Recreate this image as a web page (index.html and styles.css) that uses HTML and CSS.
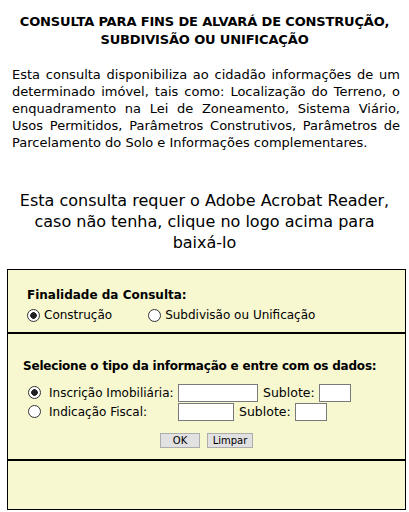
FILE: index.html
```html
<!DOCTYPE html>
<html lang="pt-BR">
<head>
    <meta charset="UTF-8">
    <title>Consulta para fins de Alvará de Construção</title>
    <link rel="stylesheet" href="styles.css">
</head>
<body>
    <h1 class="title">CONSULTA PARA FINS DE ALVARÁ DE CONSTRUÇÃO,<br>SUBDIVISÃO OU UNIFICAÇÃO</h1>

    <p class="intro">
        Esta consulta disponibiliza ao cidadão informações de um determinado imóvel, tais como: Localização do Terreno, o enquadramento na Lei de Zoneamento, Sistema Viário, Usos Permitidos, Parâmetros Construtivos, Parâmetros de Parcelamento do Solo e Informações complementares.
    </p>

    <p class="acrobat">Esta consulta requer o Adobe Acrobat Reader, caso não tenha, clique no logo acima para baixá-lo</p>

    <form class="consulta-box" onsubmit="return false">
        <div class="section section-finalidade">
            <h2>Finalidade da Consulta:</h2>
            <div class="radio-line">
                <label class="opt"><input type="radio" name="finalidade" checked>Construção</label>
                <label class="opt opt-sub"><input type="radio" name="finalidade">Subdivisão ou Unificação</label>
            </div>
        </div>

        <div class="section section-dados">
            <h2>Selecione o tipo da informação e entre com os dados:</h2>
            <div class="data-row">
                <label class="data-label"><input type="radio" name="tipo" checked>Inscrição Imobiliária:</label>
                <input type="text" class="field field-inscricao">
                <span class="sub-label">Sublote:</span>
                <input type="text" class="field field-sublote">
            </div>
            <div class="data-row">
                <label class="data-label"><input type="radio" name="tipo">Indicação Fiscal:</label>
                <input type="text" class="field field-indicacao">
                <span class="sub-label">Sublote:</span>
                <input type="text" class="field field-sublote">
            </div>
            <div class="buttons">
                <button class="btn btn-ok">OK</button>
                <button type="reset" class="btn btn-limpar">Limpar</button>
            </div>
        </div>

        <div class="section section-result"></div>
    </form>
</body>
</html>
```

FILE: styles.css
```css
/* General Styling */
body {
    font-family: "DejaVu Sans", Verdana, sans-serif;
    font-size: 13px;
    color: #000;
    background: #fff;
    margin: 0;
    padding: 0;
}

.title {
    font-size: 13px;
    font-weight: bold;
    text-align: center;
    line-height: 18px;
    letter-spacing: -0.15px;
    margin: 13px 0 0;
}

.intro {
    text-align: justify;
    line-height: 17px;
    margin: 17px 9px 0 12px;
}

.acrobat {
    font-size: 16px;
    line-height: 21px;
    text-align: center;
    margin: 39px 10px 0;
}

/* Form box */
.consulta-box {
    margin: 16px 3px 3px 7px;
    background-color: #f7f7d0;
    border: 1px solid #000;
}

.section {
    border-top: 2px solid #000;
    box-sizing: border-box;
}

.section:first-child {
    border-top: none;
}

.section h2 {
    font-size: 12px;
    font-weight: bold;
    margin: 0;
    line-height: 18px;
}

.section-finalidade {
    height: 62px;
    padding: 16px 0 0 19px;
    font-size: 12px;
}

.radio-line {
    display: flex;
    margin-top: 4px;
}

.opt {
    display: flex;
    align-items: center;
}

.opt-sub {
    margin-left: 36px;
}

input[type="radio"] {
    appearance: none;
    -webkit-appearance: none;
    width: 13px;
    height: 13px;
    margin: 0 4px 0 0;
    border: 1px solid #333;
    border-radius: 50%;
    background: #fff;
    box-sizing: border-box;
    flex: none;
}

input[type="radio"]:checked {
    background: radial-gradient(circle, #222 0, #222 3px, #fff 3.6px);
}

.section-dados {
    height: 127px;
    padding: 23px 15px 0 15px;
    font-size: 12px;
}

.section-dados h2 {
    margin-bottom: 8px;
    letter-spacing: -0.2px;
}

.data-row {
    display: flex;
    align-items: center;
    height: 19px;
}

.data-label {
    display: flex;
    align-items: center;
    width: 155px;
    padding-left: 5px;
    box-sizing: border-box;
    white-space: nowrap;
    font-size: 12px;
}

.data-label input[type="radio"] {
    margin-right: 8px;
}

.field {
    height: 18px;
    border: 1px solid #7a7a7a;
    background: #fff;
    padding: 0;
    margin: 0;
    box-sizing: border-box;
    font-size: 12px;
}

.field-inscricao {
    width: 80px;
}

.field-indicacao {
    width: 56px;
}

.field-sublote {
    width: 32px;
}

.sub-label {
    margin: 0 4px 0 5px;
    font-size: 12.5px;
}

.buttons {
    display: flex;
    justify-content: center;
    gap: 7px;
    margin-top: 12px;
}

.btn {
    font-family: "DejaVu Sans", Tahoma, sans-serif;
    font-size: 10px;
    height: 15px;
    padding: 0;
    background-color: #e1e1e1;
    border: 1px solid #adadad;
    color: #000;
    cursor: pointer;
}

.btn-ok {
    width: 40px;
}

.btn-limpar {
    width: 46px;
}

.section-result {
    height: 50px;
}
```
